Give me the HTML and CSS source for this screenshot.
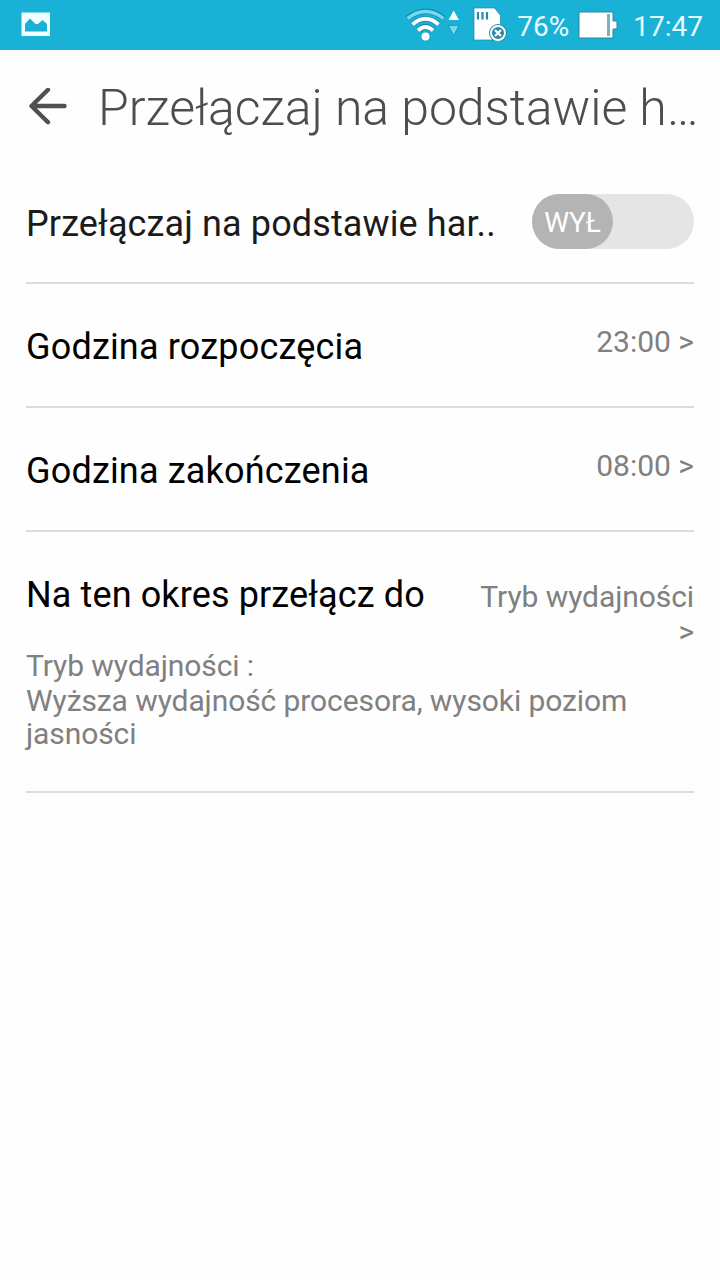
FILE: index.html
```html
<!DOCTYPE html>
<html lang="pl">
<head>
  <meta charset="UTF-8" />
  <meta name="viewport" content="width=device-width, initial-scale=1.0"/>
  <title>Przełączaj na podstawie harmonogramu</title>
  <link rel="stylesheet" href="styles.css">
</head>
<body>

  <div class="status-bar">
    <svg class="icon-picture" width="30" height="26" viewBox="0 0 30 26">
      <path fill="#f1feff" fill-rule="evenodd" d="M1.500 .5H30V24H1.500zM5 19.500h22V12l-4.500-4-4.500 4h-2.500L10 6.500 5 12z"/>
    </svg>

    <div class="status-right">
      <svg class="icon-wifi" width="54" height="36" viewBox="0 0 54 36" fill="none">
        <path d="M2 12.500Q20.500-2 39 12.500" stroke="#1489a8" stroke-width="5.500"/>
        <path d="M2.500 12.500Q20.500-1.500 38.500 12.500" stroke="#72d9ef" stroke-width="3.500"/>
        <path d="M7.500 18.500Q20.500 7 33.500 18.500M13 24.500Q20.500 17.500 28 24.500" stroke="#1489a8" stroke-width="5.500"/>
        <path d="M7.500 18.500Q20.500 7 33.500 18.500M13 24.500Q20.500 17.500 28 24.500" stroke="#fff" stroke-width="3.800"/>
        <circle cx="20.500" cy="30.500" r="4" fill="#fff"/>
        <path d="M43.500 14l5.200-9.500 5.200 9.500z" fill="#fff"/>
        <path d="M43.500 19.500h10.400l-5.200 10z" fill="#72d9ef" stroke="#1489a8" stroke-width=".7"/>
      </svg>

      <svg class="icon-card" width="34" height="36" viewBox="0 0 34 36">
        <path d="M1 3h20.500l6 7.500V35H1z" fill="#fff" stroke="#1489a8" stroke-width=".7"/>
        <path d="M5 7v7.500M9.500 7v7.500M14 7v7.500" stroke="#268aa6" stroke-width="2.200"/>
        <circle cx="25" cy="28" r="9" fill="#268aa6"/>
        <circle cx="25" cy="28" r="7" fill="#268aa6" stroke="#fff" stroke-width="2"/>
        <path d="M22 25l6 6M28 25l-6 6" stroke="#fff" stroke-width="2.200"/>
      </svg>

      <span class="percent">76%</span>

      <svg class="icon-battery" width="40" height="28" viewBox="0 0 40 28">
        <path d="M1 1h34v9h4v8h-4v9H1z" fill="#fff" stroke="#268aa6" stroke-width="1"/>
        <path d="M29 3h3v22h-3z" fill="#76b4c2"/>
      </svg>

      <span class="clock">17:47</span>
    </div>
  </div>

  <header>
    <svg class="back" width="38" height="38" viewBox="0 0 38 38">
      <path d="M19 1.800L2.500 18 19 34.200M3 18h32.500" fill="none" stroke="#505050" stroke-width="4.400" stroke-linecap="round" stroke-linejoin="round"/>
    </svg>
    <h1>Przełączaj na podstawie h…</h1>
  </header>

  <main>
    <div class="row row-switch">
      <span class="label">Przełączaj na podstawie har..</span>
      <div class="switch"><span class="knob">WYŁ</span></div>
    </div>

    <div class="row row-time">
      <span class="label">Godzina rozpoczęcia</span>
      <span class="value">23:00 &gt;</span>
    </div>

    <div class="row row-time">
      <span class="label">Godzina zakończenia</span>
      <span class="value">08:00 &gt;</span>
    </div>

    <div class="row row-mode">
      <div class="mode">
        <span class="label">Na ten okres przełącz do</span>
        <span class="value">Tryb wydajności<br>&gt;</span>
      </div>
      <p class="mode-name">Tryb wydajności :</p>
      <p class="mode-info">Wyższa wydajność procesora, wysoki poziom jasności</p>
    </div>
  </main>

</body>
</html>
```
FILE: styles.css
```css
* {
  box-sizing: border-box;
}

body {
  margin: 0;
  font-family: Roboto, sans-serif;
  background: #fefefe;
  color: #000;
  min-height: 100vh;
}

svg {
  display: block;
  flex-shrink: 0;
}

/* Status bar */
.status-bar {
  display: flex;
  justify-content: space-between;
  align-items: center;
  height: 50px;
  padding: 0 17px 0 20px;
  background: #1ab1d7;
  color: #e9fbff;
  font-size: 28px;
}

.status-right {
  display: flex;
  align-items: center;
  line-height: 46px;
}

.percent,
.clock {
  padding-top: 4px;
}

.icon-wifi {
  margin-bottom: 2px;
}

.icon-card {
  margin: 0 0 4px 14px;
}

.percent {
  margin-left: 10px;
}

.icon-battery {
  margin-left: 9px;
}

.clock {
  margin-left: 15px;
}

/* Title */
header {
  display: flex;
  align-items: center;
  height: 110px;
  padding: 4px 20px 0 29px;
}

h1 {
  margin: 2px 0 0 31px;
  color: #4d4d4d;
  font-size: 50px;
  font-weight: 300;
  letter-spacing: -0.07px;
  white-space: nowrap;
}

/* Settings list */
main {
  padding: 0 26px;
}

.row {
  border-bottom: 2px solid #dcdcdc;
}

.row-switch,
.row-time {
  display: flex;
  justify-content: space-between;
  align-items: center;
  height: 124px;
}

.label {
  font-size: 36px;
  line-height: 42px;
  letter-spacing: 0.12px;
  white-space: nowrap;
}

.row-switch .label {
  margin-top: 5px;
  color: #1b1b1b;
}

.row-time .label {
  margin-top: 4px;
  letter-spacing: 0.18px;
}

.value {
  color: #808080;
  font-size: 30px;
  line-height: 35px;
  text-align: right;
}

.row-time .value {
  margin-bottom: 8px;
}

.switch {
  width: 162px;
  height: 55px;
  border-radius: 28px;
  background: #e5e5e5;
}

.knob {
  display: block;
  width: 81px;
  height: 55px;
  border-radius: 28px;
  background: #b4b4b4;
  color: #fff;
  font-size: 28px;
  line-height: 57px;
  text-align: center;
}

.row-mode {
  height: 261px;
  padding-top: 42px;
}

.mode {
  display: flex;
  justify-content: space-between;
}

.mode .value {
  padding-top: 5px;
  letter-spacing: -0.08px;
}

.row-mode p {
  margin: 0;
  color: #808080;
  font-size: 30px;
  letter-spacing: -0.09px;
}

.row-mode .mode-name {
  margin-top: -1px;
  line-height: 36px;
}

.mode-info {
  line-height: 33px;
}
```
